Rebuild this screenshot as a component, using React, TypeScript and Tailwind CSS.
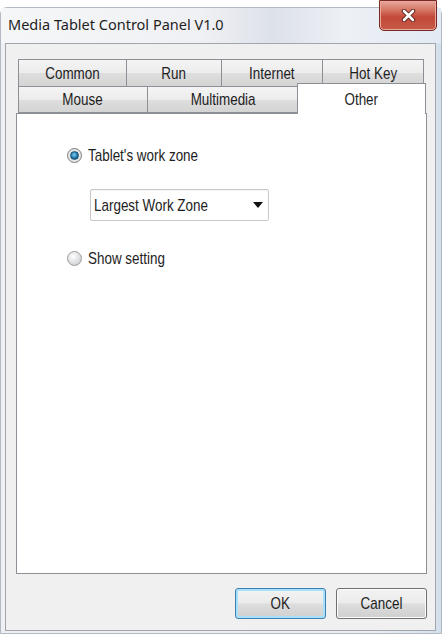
import { useState } from 'react';

const ui = "font-['Liberation_Sans',Arial,sans-serif] text-[17px] text-[#1e1e1e]";

function Label({ children, left = false }: { children: React.ReactNode; left?: boolean }) {
  return (
    <span className={`inline-block whitespace-nowrap leading-none scale-x-[0.79] ${left ? 'origin-left' : 'origin-center'}`}>
      {children}
    </span>
  );
}

function Radio({ checked }: { checked: boolean }) {
  return (
    <span
      className={`flex h-[15px] w-[15px] shrink-0 items-center justify-center rounded-full border ${
        checked
          ? 'border-[#7a7d82] bg-[radial-gradient(circle_at_50%_50%,#ffffff,#d6d6d6)]'
          : 'border-[#9a9ca0] bg-[radial-gradient(circle_at_40%_35%,#ffffff,#d2d3d5_75%,#c3c4c6)]'
      }`}
    >
      {checked && (
        <span className="h-[9px] w-[9px] rounded-full border border-[#1d4f6e] bg-[radial-gradient(circle_at_45%_40%,#7fd2f5,#1f78ad_55%,#0b4068)]" />
      )}
    </span>
  );
}

function Tab({ label, width, first = false }: { label: string; width: string; first?: boolean }) {
  return (
    <div
      className={`flex h-full ${width} ${first ? '' : '-ml-px'} items-center justify-center border border-[#8c8f96] bg-[linear-gradient(to_bottom,#f4f4f4_0%,#ececec_50%,#dedede_51%,#d4d4d4_100%)]`}
    >
      <Label>{label}</Label>
    </div>
  );
}

function Button({ label, focused = false }: { label: string; focused?: boolean }) {
  return (
    <button
      className={`flex h-[31px] w-[91px] items-center justify-center rounded-[3px] border bg-[linear-gradient(to_bottom,#f3f3f3_0%,#ebebeb_48%,#dddddd_52%,#cfcfcf_100%)] ${
        focused
          ? 'border-[#3c7fb1] shadow-[inset_0_0_0_2px_#a7e0fb]'
          : 'border-[#707070] shadow-[inset_0_0_0_1px_#fcfcfc]'
      }`}
    >
      <Label>{label}</Label>
    </button>
  );
}

export default function App() {
  const [mode, setMode] = useState<'zone' | 'show'>('zone');

  return (
    <div className={`flex h-[634px] w-[442px] flex-col bg-white ${ui}`}>
      <div className="mt-[7px] flex flex-1 flex-col rounded-t-[7px] border border-[#b3b9c2] bg-[linear-gradient(to_right,#eef0f4_0%,#eceef2_85%,#d3e0ec_100%)]">
        {/* title bar */}
        <div className="flex h-[35px] items-start bg-[linear-gradient(to_right,#f5f6f8_0%,#f0f1f4_45%,#dde1e9_62%,#edf0f5_78%,#e2eaf3_100%)] pl-[7px]">
          <span className="pt-[6px] font-['Noto_Sans',sans-serif] text-[14.5px] leading-[20px] text-[#1e1e1e]">
            Media Tablet Control Panel V1.0
          </span>
          <div className="-mt-[8px] ml-auto mr-[4px] flex h-[31px] w-[58px] items-center justify-center rounded-b-[5px] border border-[#772a24] bg-[linear-gradient(to_bottom,#e8a89c_0%,#d2705f_35%,#c4483a_55%,#c65b48_100%)] shadow-[inset_0_0_0_1px_#eba99e]">
            <svg width="15" height="13" viewBox="0 0 15 13">
              <path d="M3 2 L12 11 M12 2 L3 11" stroke="#5a1e1a" strokeWidth="4.5" strokeLinecap="round" />
              <path d="M3 2 L12 11 M12 2 L3 11" stroke="#ffffff" strokeWidth="2.6" strokeLinecap="round" />
            </svg>
          </div>
        </div>

        {/* client area */}
        <div className="mb-[2px] ml-[4px] mr-[5px] flex flex-1 flex-col border border-[#a3a5ad] bg-[#f0f0f0] pb-[11px] pl-[10px] pr-[8px] pt-[15px]">
          <div className="flex w-[411px] flex-col">
            <div className="flex h-[28px] pl-[2px]">
              <Tab label="Common" width="w-[109px]" first />
              <Tab label="Run" width="w-[96px]" />
              <Tab label="Internet" width="w-[102px]" />
              <Tab label="Hot Key" width="w-[102px]" />
            </div>
            <div className="-mt-px flex h-[27px] items-start pl-[2px]">
              <Tab label="Mouse" width="w-[130px]" first />
              <Tab label="Multimedia" width="w-[152px]" />
              <div className="relative z-10 -mb-px -ml-[2px] -mt-[3px] flex h-[31px] w-[129px] items-start justify-center border border-b-0 border-[#8c8f96] bg-white pt-[7px]">
                <Label>Other</Label>
              </div>
            </div>

            {/* panel */}
            <div className="flex h-[461px] flex-col border border-[#8c8f96] bg-white pl-[50px] pt-[33px]">
              <button className="flex h-[16px] items-center gap-[6px] text-left" onClick={() => setMode('zone')}>
                <Radio checked={mode === 'zone'} />
                <Label left>Tablet's work zone</Label>
              </button>

              <div className="ml-[23px] mt-[26px] flex h-[32px] w-[179px] items-center justify-between rounded-[2px] border border-[#c9c9c9] bg-white pl-[3px] pr-[5px] shadow-[inset_0_1px_0_#f4f4f4]">
                <Label left>Largest Work Zone</Label>
                <svg width="10" height="6" viewBox="0 0 10 6">
                  <path d="M0 0 H10 L5 6 Z" fill="#111111" />
                </svg>
              </div>

              <button className="mt-[29px] flex h-[16px] items-center gap-[6px] text-left" onClick={() => setMode('show')}>
                <Radio checked={mode === 'show'} />
                <Label left>Show setting</Label>
              </button>
            </div>
          </div>

          <div className="mt-auto flex justify-end gap-[10px]">
            <Button label="OK" focused />
            <Button label="Cancel" />
          </div>
        </div>
      </div>
    </div>
  );
}
